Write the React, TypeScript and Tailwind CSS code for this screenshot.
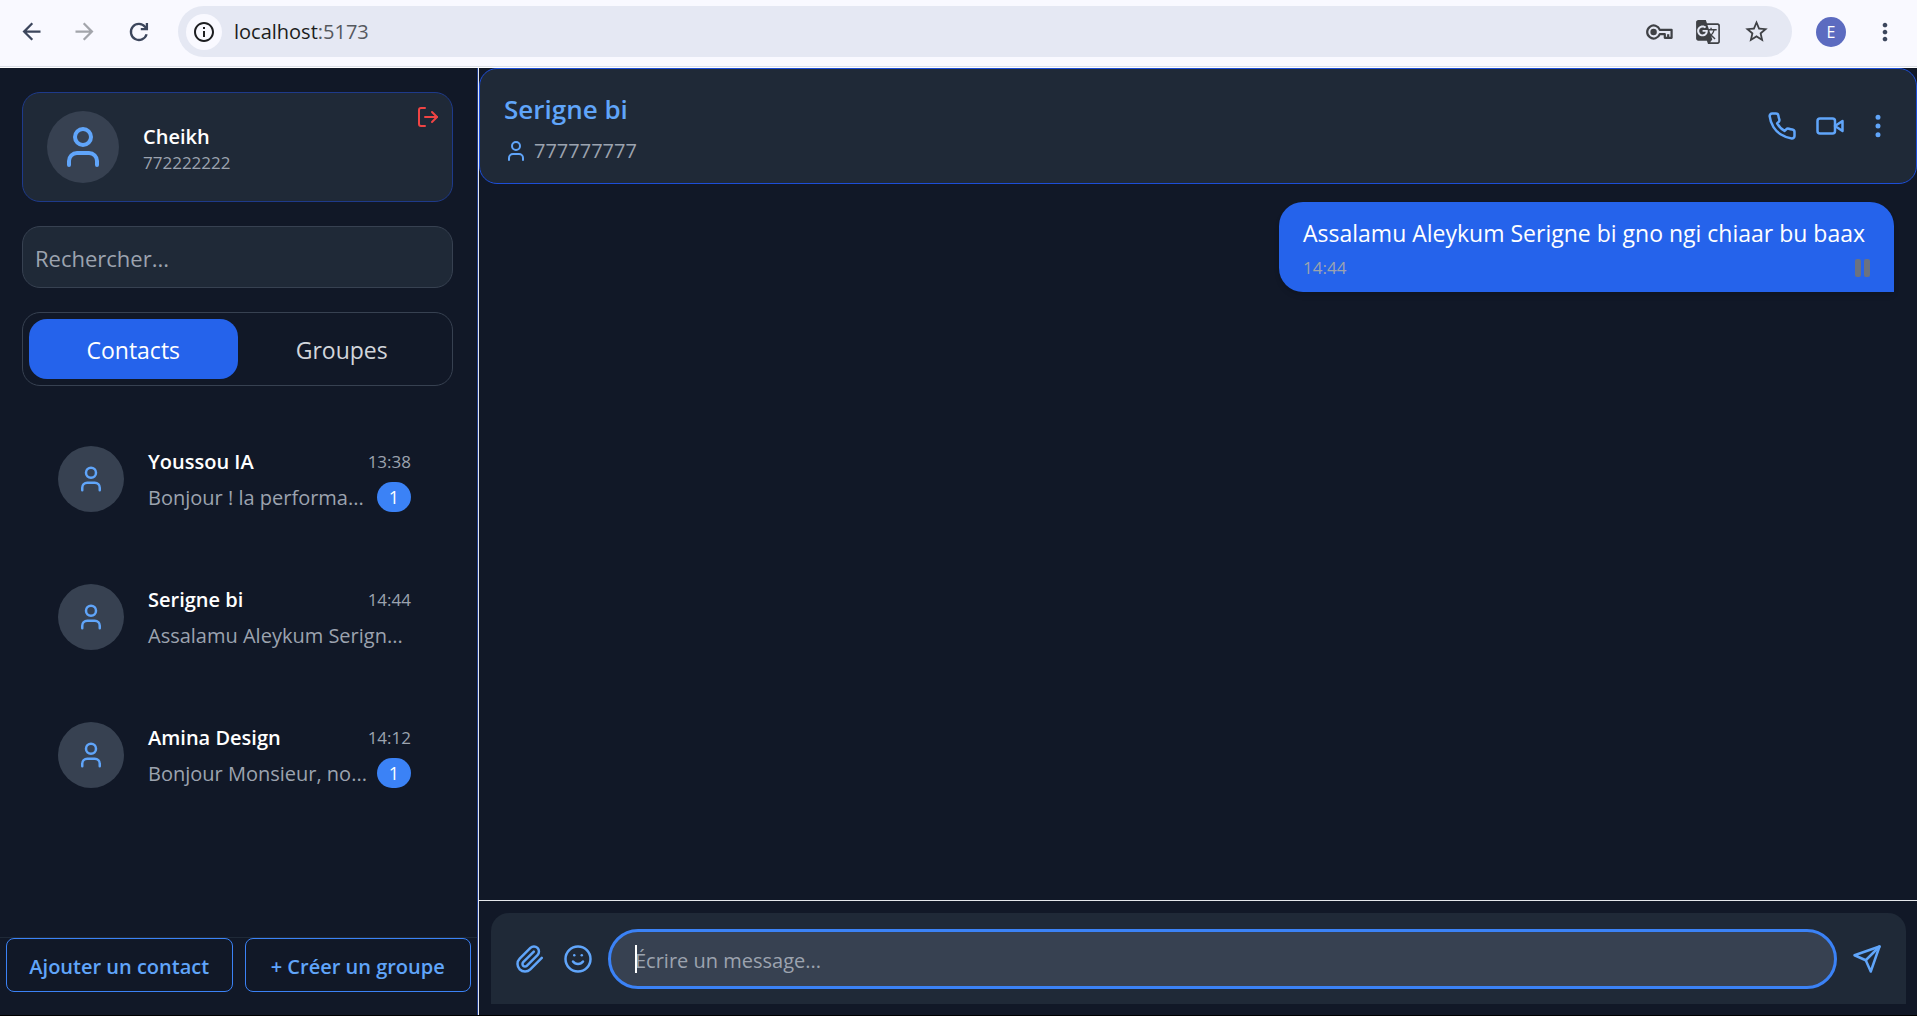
import React from "react";
import type { ReactNode } from "react";
import { EllipsisVertical, LogOut, Smile, User } from "lucide-react";
import { MdArrowBack, MdArrowForward, MdGTranslate, MdInfoOutline, MdMoreVert, MdStarBorder } from "react-icons/md";

type Contact = { name: string; time: string; preview: string; unread?: number };

const contacts: Contact[] = [
  { name: "Youssou IA", time: "13:38", preview: "Bonjour ! la performa...", unread: 1 },
  { name: "Serigne bi", time: "14:44", preview: "Assalamu Aleykum Serign..." },
  { name: "Amina Design", time: "14:12", preview: "Bonjour Monsieur, no...", unread: 1 },
];

function LineIcon({ children }: { children: ReactNode }) {
  return (
    <svg width="30" height="30" viewBox="0 0 24 24" fill="none" stroke="currentColor" strokeWidth="2" strokeLinecap="round" strokeLinejoin="round" aria-hidden="true">
      {children}
    </svg>
  );
}

function PhoneIcon() {
  return (
    <LineIcon>
      <path d="M22 16.92v3a2 2 0 0 1-2.18 2 19.79 19.79 0 0 1-8.63-3.07 19.5 19.5 0 0 1-6-6 19.79 19.79 0 0 1-3.07-8.67A2 2 0 0 1 4.11 2h3a2 2 0 0 1 2 1.72 12.84 12.84 0 0 0 .7 2.81 2 2 0 0 1-.45 2.11L8.09 9.91a16 16 0 0 0 6 6l1.27-1.27a2 2 0 0 1 2.11-.45 12.84 12.84 0 0 0 2.81.7A2 2 0 0 1 22 16.92z" />
    </LineIcon>
  );
}

function VideoIcon() {
  return (
    <LineIcon>
      <path d="m22 8-6 4 6 4V8Z" />
      <rect x="2" y="6" width="14" height="12" rx="2" />
    </LineIcon>
  );
}

function PaperclipIcon() {
  return (
    <LineIcon>
      <path d="m21.44 11.05-9.19 9.19a6 6 0 0 1-8.49-8.49l8.57-8.57A4 4 0 1 1 18 8.84l-8.59 8.57a2 2 0 0 1-2.83-2.83l8.49-8.48" />
    </LineIcon>
  );
}

function SendIcon() {
  return (
    <LineIcon>
      <path d="M22 2 11 13" />
      <path d="M22 2 15 22 11 13 2 9Z" />
    </LineIcon>
  );
}

function ReloadIcon() {
  return (
    <svg width="24" height="24" viewBox="0 0 24 24" fill="none" stroke="currentColor" strokeWidth="2.3" aria-hidden="true">
      <path d="M19.6 14.2A8 8 0 1 1 18.2 7L19.6 8.6" />
      <path d="M19.9 3V9.1H13.8" />
    </svg>
  );
}

function KeyIcon() {
  return (
    <svg width="28" height="20" viewBox="0 0 28 20" fill="none" stroke="#3f4145" strokeWidth="2.2" strokeLinejoin="round" aria-hidden="true">
      <path d="M14.8 7.8A6.5 6.5 0 1 0 14.8 12.2H19.8V15.8H26.6V7.8Z" />
      <path d="M23.2 15.6V12.2" />
      <circle cx="8.6" cy="10" r="3.2" fill="#3f4145" stroke="none" />
    </svg>
  );
}

function PendingIcon() {
  return (
    <svg width="24" height="24" viewBox="0 0 24 24" fill="#6b7280" aria-hidden="true">
      <rect x="9" y="3" width="6" height="18" rx="2" />
      <rect x="18" y="3" width="6" height="18" rx="2" />
    </svg>
  );
}

function BrowserBar() {
  return (
    <div className="flex h-[68px] shrink-0 items-center border-b border-white bg-[#f9f9ff] pr-[18px] pb-1 pl-[15px] shadow-[inset_0_-1px_0_#dcdfe8]">
      <button aria-label="Retour" className="flex h-8 w-8 items-center justify-center text-[#3c465c]">
        <MdArrowBack size={27} />
      </button>
      <button aria-label="Avancer" className="ml-[21px] flex h-8 w-8 items-center justify-center text-[#a3a5ab]">
        <MdArrowForward size={27} />
      </button>
      <button aria-label="Actualiser" className="ml-[23px] flex h-8 w-8 items-center justify-center text-[#3c465c]">
        <ReloadIcon />
      </button>
      <div className="ml-[23px] flex h-[51px] min-w-0 flex-1 items-center rounded-full bg-[#e5e8f3] pr-[22px] pl-2">
        <button aria-label="Informations du site" className="flex h-9 w-9 items-center justify-center rounded-full bg-[#f9f9ff] text-[#1c1d20]">
          <MdInfoOutline size={24} />
        </button>
        <div className="ml-3 flex-1 text-[20px] text-[#1c1d20]">
          localhost<span className="text-[#55585e]">:5173</span>
        </div>
        <div className="flex items-center gap-[22px] text-[#3f4145]">
          <button aria-label="Mots de passe"><KeyIcon /></button>
          <button aria-label="Traduire"><MdGTranslate size={26} /></button>
          <button aria-label="Favoris"><MdStarBorder size={27} /></button>
        </div>
      </div>
      <button aria-label="Profil" className="ml-6 flex h-[30px] w-[30px] items-center justify-center rounded-full bg-[#5c6bc0] text-[16px] text-white">E</button>
      <button aria-label="Menu" className="ml-[25px] text-[#3c465c]"><MdMoreVert size={28} /></button>
    </div>
  );
}

function ContactRow({ contact }: { contact: Contact }) {
  return (
    <li className="flex h-[66px] items-start gap-6">
      <div className="flex h-[66px] w-[66px] shrink-0 items-center justify-center rounded-full bg-[#374151] text-[#60a5fa]">
        <User size={30} />
      </div>
      <div className="min-w-0 flex-1 pt-px">
        <div className="flex items-center justify-between leading-[30px]">
          <h3 className="text-[20px] font-semibold text-white">{contact.name}</h3>
          <time className="text-[17px] text-[#9ca3af]">{contact.time}</time>
        </div>
        <div className="mt-[3px] flex items-center justify-between gap-2">
          <p className="pt-0.5 text-[20px] leading-8 whitespace-nowrap text-[#9ca3af]">{contact.preview}</p>
          {contact.unread && (
            <span className="flex h-[30px] w-[34px] items-center justify-center rounded-full bg-[#3b82f6] text-[18px] text-white">{contact.unread}</span>
          )}
        </div>
      </div>
    </li>
  );
}

function Sidebar() {
  return (
    <aside className="flex w-[478px] shrink-0 flex-col border-r border-[#1e3a8a]">
      <div className="flex flex-col gap-6 pt-6 pr-6 pl-[22px]">
        <div className="relative flex h-[110px] items-center gap-6 rounded-[18px] border border-[#1e3a8a] bg-[#1f2937] px-6">
          <div className="flex h-[72px] w-[72px] items-center justify-center rounded-full bg-[#374151] text-[#60a5fa]">
            <User size={48} />
          </div>
          <div className="pt-1">
            <h2 className="text-[20px] leading-7 font-semibold text-white">Cheikh</h2>
            <p className="text-[17px] leading-6 text-[#9ca3af]">772222222</p>
          </div>
          <button aria-label="Déconnexion" className="absolute top-3 right-3 text-[#ef4444]">
            <LogOut size={24} />
          </button>
        </div>
        <input
          type="search"
          aria-label="Rechercher"
          placeholder="Rechercher..."
          className="h-[62px] w-full rounded-[18px] border border-[#374151] bg-[#1f2937] px-3 pt-0.5 text-[22px] text-white outline-none placeholder:text-[#9ca3af]"
        />
        <div className="flex h-[74px] rounded-[18px] border border-[#374151] p-1.5 text-[23px]">
          <button className="flex-1 rounded-[18px] bg-[#2563eb] pt-0.5 text-white">Contacts</button>
          <button className="flex-1 rounded-[18px] pt-0.5 text-[#d1d5db]">Groupes</button>
        </div>
      </div>
      <ul className="flex flex-1 flex-col gap-[72px] pt-[60px] pr-[66px] pl-[58px]">
        {contacts.map((c) => (
          <ContactRow key={c.name} contact={c} />
        ))}
      </ul>
      <div className="flex gap-3 border-t border-[#1f2937] px-1.5 pb-[23px] text-[20px] font-semibold text-[#60a5fa]">
        <button className="h-[54px] flex-1 rounded-lg border border-[#3b82f6] pt-1">Ajouter un contact</button>
        <button className="h-[54px] flex-1 rounded-lg border border-[#3b82f6] pt-1">+ Créer un groupe</button>
      </div>
    </aside>
  );
}

function Conversation() {
  return (
    <main className="flex min-w-0 flex-1 flex-col border-l border-[#e5e7eb]">
      <header className="flex h-[116px] items-center justify-between rounded-[18px] border border-[#1d4ed8] bg-[#1f2937] pr-[23px] pl-6">
        <div className="pt-1.5">
          <h1 className="text-[26px] leading-9 font-semibold text-[#60a5fa]">Serigne bi</h1>
          <p className="mt-2 flex items-center gap-1.5 text-[20px] leading-8 text-[#9ca3af]">
            <User size={24} className="text-[#60a5fa]" />
            777777777
          </p>
        </div>
        <div className="flex gap-[18px] text-[#60a5fa]">
          <button aria-label="Appel audio"><PhoneIcon /></button>
          <button aria-label="Appel vidéo"><VideoIcon /></button>
          <button aria-label="Options"><EllipsisVertical size={30} /></button>
        </div>
      </header>
      <section className="flex flex-1 flex-col items-end px-[23px] pt-[18px]">
        <article className="rounded-3xl rounded-br-none bg-[#2563eb] px-6 pt-3 pb-3 shadow-md">
          <p className="pr-[5px] text-[23px] leading-[38px] text-white">Assalamu Aleykum Serigne bi gno ngi chiaar bu baax</p>
          <div className="mt-1 flex items-center justify-between text-[17px] leading-6 text-[#9ca3af]">
            <time>14:44</time>
            <PendingIcon />
          </div>
        </article>
      </section>
      <footer className="border-t border-[#e5e7eb] pt-3 pr-[11px] pb-[11px] pl-3">
        <form className="flex h-[91px] items-center rounded-t-[18px] bg-[#1f2937] px-6 text-[#60a5fa]" onSubmit={(e) => e.preventDefault()}>
          <button type="button" aria-label="Joindre un fichier"><PaperclipIcon /></button>
          <button type="button" aria-label="Emoji" className="ml-[18px]"><Smile size={30} /></button>
          <div className="relative mx-[15px] flex-1">
            <input
              type="text"
              aria-label="Message"
              placeholder="Écrire un message..."
              className="h-[60px] w-full rounded-full border-[3px] border-[#3b82f6] bg-[#374151] px-6 pt-1 text-[20px] text-white outline-none placeholder:text-[#9ca3af]"
            />
            <span className="absolute top-4 left-[27px] h-7 w-0.5 bg-white" />
          </div>
          <button type="submit" aria-label="Envoyer"><SendIcon /></button>
        </form>
      </footer>
    </main>
  );
}

export default function App() {
  return (
    <div className="flex h-screen flex-col overflow-hidden bg-[#111827] font-['Open_Sans','Noto_Sans',sans-serif]">
      <BrowserBar />
      <div className="flex min-h-0 flex-1 border-b border-black">
        <Sidebar />
        <Conversation />
      </div>
    </div>
  );
}
